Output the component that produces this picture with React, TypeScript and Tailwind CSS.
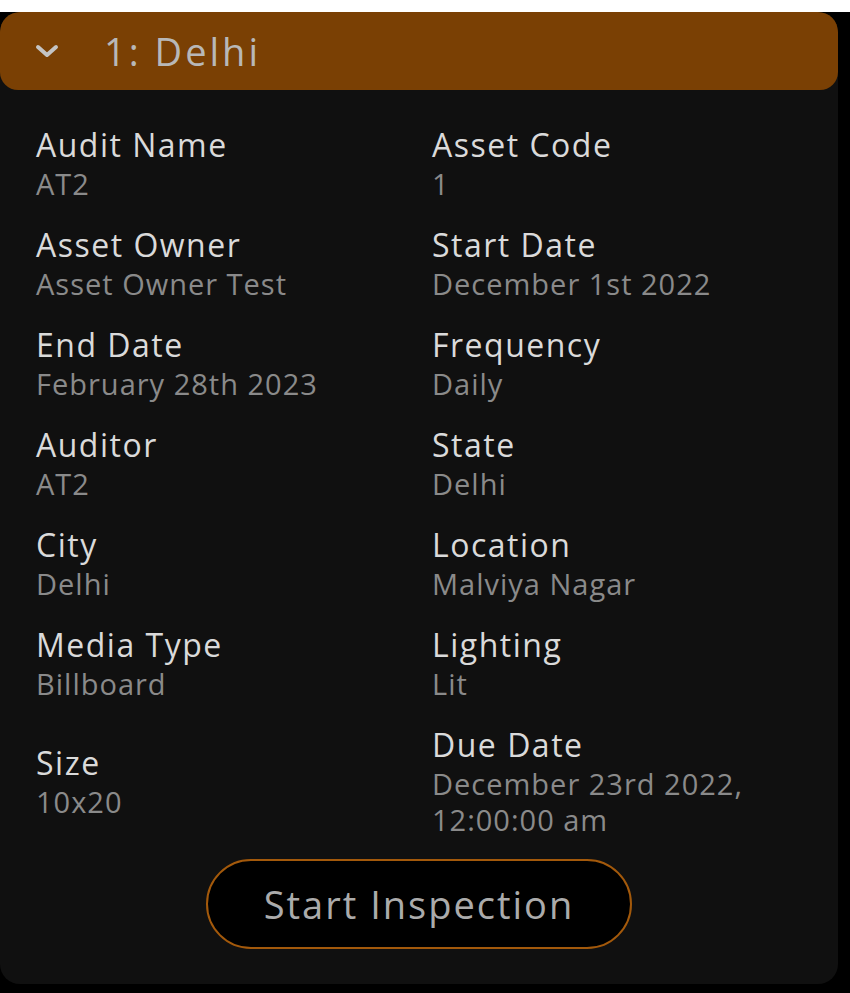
import React from 'react';

const fields: { label: string; value: string[] }[] = [
  { label: 'Audit Name', value: ['AT2'] },
  { label: 'Asset Code', value: ['1'] },
  { label: 'Asset Owner', value: ['Asset Owner Test'] },
  { label: 'Start Date', value: ['December 1st 2022'] },
  { label: 'End Date', value: ['February 28th 2023'] },
  { label: 'Frequency', value: ['Daily'] },
  { label: 'Auditor', value: ['AT2'] },
  { label: 'State', value: ['Delhi'] },
  { label: 'City', value: ['Delhi'] },
  { label: 'Location', value: ['Malviya Nagar'] },
  { label: 'Media Type', value: ['Billboard'] },
  { label: 'Lighting', value: ['Lit'] },
  { label: 'Size', value: ['10x20'] },
  { label: 'Due Date', value: ['December 23rd 2022,', '12:00:00 am'] },
];

const AuditCard = () => {
  return (
    <div className="w-[838px] mt-3 rounded-[20px] bg-[#101010] overflow-hidden">
      {/* Header */}
      <div className="h-[78px] flex items-center bg-[#7a4004] rounded-[18px] pl-[35px]">
        <svg width="24" height="16" viewBox="0 0 24 16" className="text-[#c4c4c4]">
          <path d="M3 4 L12 12 L21 4" fill="none" stroke="currentColor" strokeWidth="4" strokeLinecap="round" strokeLinejoin="round" />
        </svg>
        <span className="ml-[45px] text-[38px] leading-none text-[#b8b8b8] tracking-[3px]">1: Delhi</span>
      </div>

      {/* Details */}
      <div className="grid grid-cols-2 items-center gap-y-[22px] pt-[34px] pl-[36px] pr-[10px]">
        {fields.map((f) => (
          <div key={f.label} className="flex flex-col">
            <div className="text-[32px] leading-[42px] tracking-[1.5px] text-[#dadada]">{f.label}</div>
            {f.value.map((v) => (
              <div key={v} className="text-[29px] leading-[36px] tracking-[1px] text-[#8a8a8a]">{v}</div>
            ))}
          </div>
        ))}
      </div>

      {/* Action */}
      <div className="flex justify-center pt-[21px] pb-[35px]">
        <button className="w-[426px] h-[90px] rounded-full border-2 border-[#a3590b] bg-black text-[38px] tracking-[2px] text-[#ababab]">
          Start Inspection
        </button>
      </div>
    </div>
  );
};

export default function App() {
  return (
    <div className="min-h-screen bg-black" style={{ fontFamily: '"Open Sans", "Noto Sans", sans-serif' }}>
      <AuditCard />
    </div>
  );
}
